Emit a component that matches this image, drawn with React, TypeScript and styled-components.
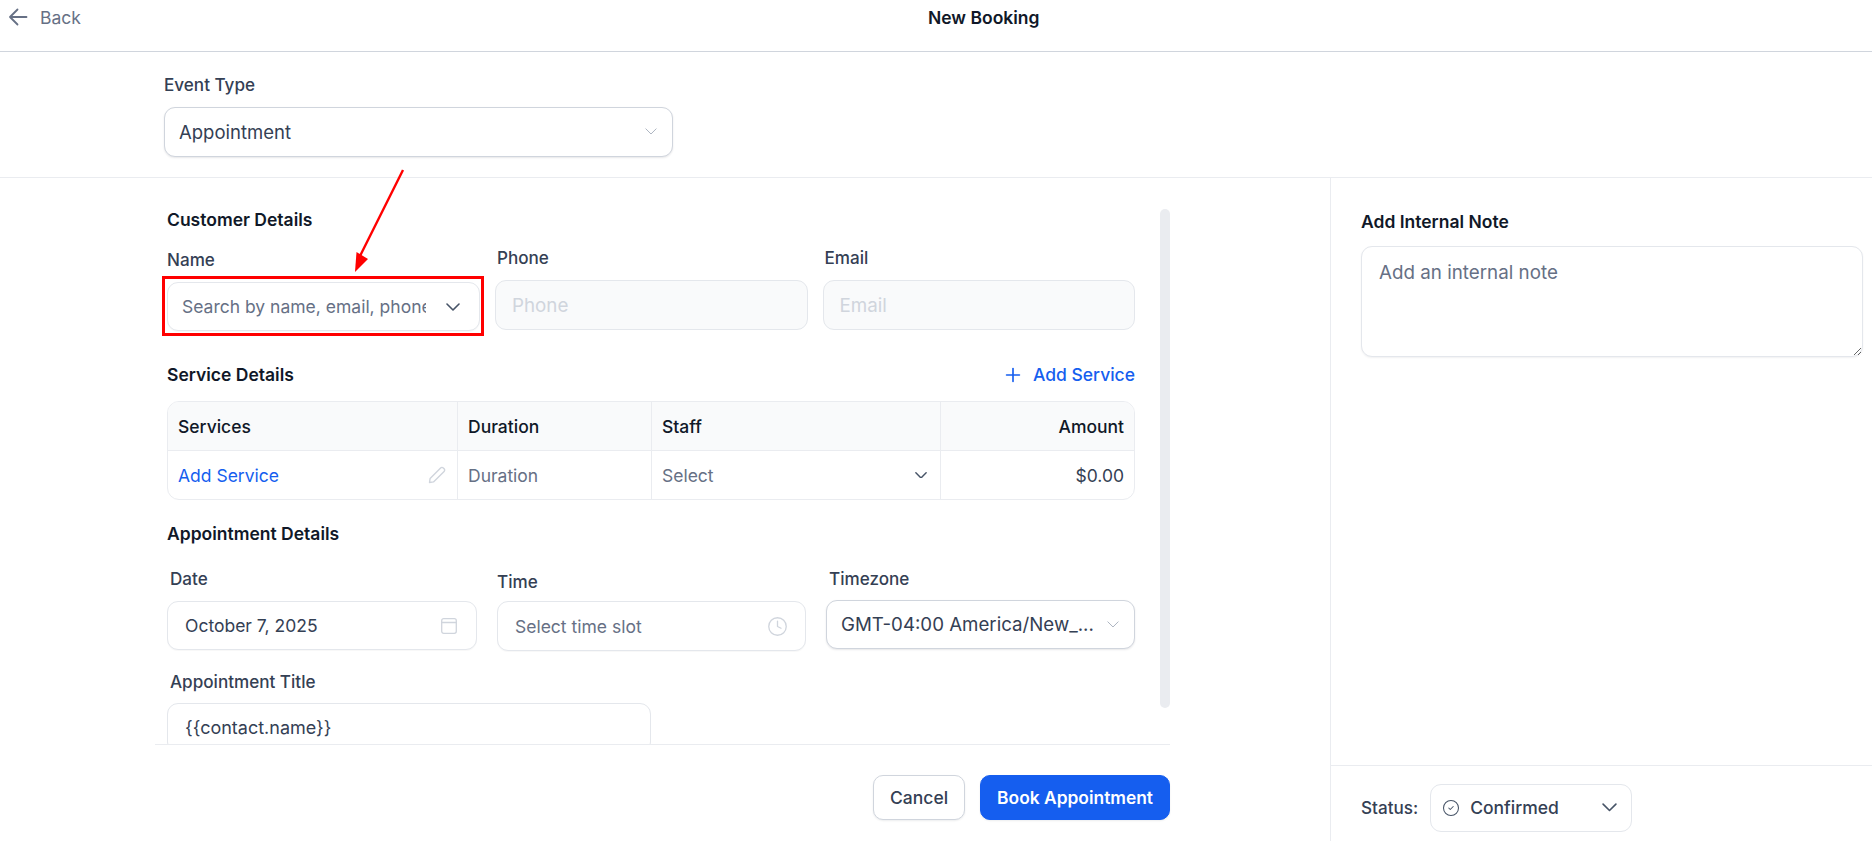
import styled, { createGlobalStyle } from "styled-components";
import { CircleCheck, Clock, Plus } from "lucide-react";

const GlobalStyle = createGlobalStyle`
  html, body {
    margin: 0;
    padding: 0;
    background: #fff;
    font-family: Inter, "Noto Sans", sans-serif;
    color: #344054;
    overflow: hidden;
  }
  * {
    box-sizing: border-box;
  }
`;

const Page = styled.div`
  position: relative;
  width: 1872px;
  height: 841px;
  display: flex;
  flex-direction: column;
  overflow: hidden;
`;

const TopBar = styled.header`
  height: 52px;
  flex: none;
  display: grid;
  grid-template-columns: 928px auto;
  border-bottom: 1px solid #d0d5dd;
  padding-bottom: 17px;
`;

const BackLink = styled.a`
  display: flex;
  align-items: center;
  gap: 12px;
  padding-left: 8px;
  font-size: 17.5px;
  color: #667085;
`;

const PageTitle = styled.h1`
  margin: 0;
  align-self: center;
  font-size: 17.5px;
  font-weight: 600;
  color: #101828;
`;

const EventBar = styled.section`
  height: 126px;
  flex: none;
  padding: 22px 0 0 164px;
  border-bottom: 1px solid #eaecf0;
`;

const Body = styled.div`
  flex: 1;
  min-height: 0;
  display: flex;
`;

const MainColumn = styled.main`
  width: 1331px;
  flex: none;
  border-right: 1px solid #eaecf0;
  padding-left: 155px;
`;

const ScrollArea = styled.div`
  width: 1015px;
  height: 567px;
  display: flex;
  overflow: hidden;
  padding-left: 12px;
  border-bottom: 1px solid #eaecf0;
`;

const Form = styled.div`
  width: 968px;
  flex: none;
  padding-top: 32px;
`;

const ScrollThumb = styled.div`
  width: 10px;
  height: 499px;
  flex: none;
  margin: 31px 0 0 25px;
  border-radius: 5px;
  background: #eaecf0;
`;

const SectionTitle = styled.h2<{ $top?: number }>`
  margin: ${(p) => p.$top ?? 0}px 0 0;
  font-size: 17.5px;
  line-height: 20px;
  font-weight: 600;
  color: #101828;
`;

const SectionHead = styled.div`
  margin-top: 33px;
  height: 22px;
  display: flex;
  align-items: center;
  justify-content: space-between;
`;

const AddLink = styled.a`
  display: flex;
  align-items: center;
  gap: 13px;
  font-size: 17.5px;
  line-height: 20px;
  font-weight: 500;
  color: #155eef;
`;

const AddIcon = styled(Plus)`
  margin: 0 -4px;
`;

const FieldRow = styled.div<{ $columns: string; $top: number }>`
  display: grid;
  grid-template-columns: ${(p) => p.$columns};
  margin-top: ${(p) => p.$top}px;
`;

const Field = styled.div<{ $top?: number; $gap?: number; $width?: number; $side?: number }>`
  display: flex;
  flex-direction: column;
  margin: ${(p) => p.$top ?? 0}px 0 0 ${(p) => p.$side ?? 0}px;
  gap: ${(p) => p.$gap ?? 11}px;
  ${(p) => (p.$width ? `width: ${p.$width}px;` : "")}
`;

const MiddleField = styled(Field)`
  margin-right: 20px;
`;

const Label = styled.label<{ $indent?: number }>`
  display: block;
  padding-left: ${(p) => p.$indent ?? 0}px;
  font-size: 17.1px;
  line-height: 22px;
  font-weight: 500;
  color: #344054;
`;

const Box = styled.div<{ $height?: number; $right?: number; $lift?: number }>`
  height: ${(p) => p.$height ?? 49}px;
  display: flex;
  align-items: center;
  gap: 8px;
  padding: 0 ${(p) => p.$right ?? 17}px ${(p) => p.$lift ?? 0}px 17px;
  background: #fff;
  border: 1px solid #e4e7ec;
  border-radius: 11px;
  box-shadow: 0 1px 1px rgba(16, 24, 40, 0.03);
`;

const SelectBox = styled(Box)`
  padding: 0 15px ${(p) => p.$lift ?? 0}px 14px;
  border-color: #d0d5dd;
  box-shadow: 0 1px 2px rgba(16, 24, 40, 0.1);
`;

const NameBox = styled(Box)`
  padding: 0 19px 0 14px;
  gap: 20px;
`;

const BoxText = styled.span<{ $muted?: boolean; $size?: number }>`
  flex: 1;
  min-width: 0;
  white-space: nowrap;
  font-size: ${(p) => p.$size ?? 17.5}px;
  color: ${(p) => (p.$muted ? "#667085" : "#344054")};
`;

const ClippedInput = styled.input`
  flex: 1;
  min-width: 0;
  border: 0;
  outline: 0;
  padding: 0;
  background: transparent;
  font: inherit;
  font-size: 17.5px;
  &::placeholder {
    color: #667085;
    opacity: 1;
  }
`;

const DisabledInput = styled.input`
  width: 100%;
  height: 50px;
  padding: 0 16px;
  border: 1px solid #e4e7ec;
  border-radius: 11px;
  outline: 0;
  background: #f9fafb;
  font: inherit;
  font-size: 18.8px;
  &::placeholder {
    color: #d0d5dd;
    opacity: 1;
  }
`;

const Marked = styled.div`
  position: relative;
  &::after {
    content: "";
    position: absolute;
    inset: -6px -4px -5px -5px;
    border: 3px solid #f00;
    pointer-events: none;
  }
`;

const ServiceTable = styled.div`
  margin-top: 15px;
  height: 99px;
  display: grid;
  grid-template-columns: 290px 194px 289px 1fr;
  grid-template-rows: 49px 48px;
  border: 1px solid #eaecf0;
  border-radius: 12px;
  overflow: hidden;
`;

const HeadCell = styled.div<{ $end?: boolean }>`
  display: flex;
  align-items: center;
  justify-content: ${(p) => (p.$end ? "flex-end" : "flex-start")};
  padding: 0 10px;
  background: #f9fafb;
  border-bottom: 1px solid #eaecf0;
  border-right: ${(p) => (p.$end ? "0" : "1px solid #eaecf0")};
  font-size: 17.5px;
  font-weight: 500;
  color: #101828;
`;

const BodyCell = styled.div<{ $end?: boolean; $tone?: string; $right?: number }>`
  display: flex;
  align-items: center;
  justify-content: ${(p) => (p.$end ? "flex-end" : "space-between")};
  padding: 0 ${(p) => p.$right ?? 10}px 0 10px;
  border-right: ${(p) => (p.$end ? "0" : "1px solid #eaecf0")};
  font-size: 17.5px;
  color: ${(p) => p.$tone ?? "#667085"};
`;

const ActionBar = styled.div`
  width: 1015px;
  display: flex;
  justify-content: flex-end;
  gap: 15px;
  padding-top: 30px;
`;

const Button = styled.button<{ $primary?: boolean }>`
  height: 45px;
  padding: 0 16px;
  border: 1px solid ${(p) => (p.$primary ? "#155eef" : "#d0d5dd")};
  border-radius: 10px;
  background: ${(p) => (p.$primary ? "#155eef" : "#fff")};
  color: ${(p) => (p.$primary ? "#fff" : "#344054")};
  font: inherit;
  font-size: ${(p) => (p.$primary ? 17.4 : 17.5)}px;
  font-weight: ${(p) => (p.$primary ? 600 : 500)};
  box-shadow: 0 1px 2px rgba(16, 24, 40, 0.08);
`;

const SideColumn = styled.aside`
  flex: 1;
  display: flex;
  flex-direction: column;
`;

const NotePanel = styled.div`
  flex: 1;
  padding: 34px 9px 0 30px;
`;

const NoteInput = styled.textarea`
  display: block;
  width: 100%;
  height: 111px;
  margin-top: 14px;
  padding: 14px 17px;
  border: 1px solid #e4e7ec;
  border-radius: 11px;
  outline: 0;
  font: inherit;
  font-size: 18.8px;
  box-shadow: 0 1px 2px rgba(16, 24, 40, 0.06);
  &::placeholder {
    color: #667085;
    opacity: 1;
  }
`;

const StatusBar = styled.div`
  height: 76px;
  flex: none;
  display: flex;
  align-items: center;
  gap: 12px;
  padding: 8px 0 0 30px;
  border-top: 1px solid #eaecf0;
  font-size: 17.1px;
  font-weight: 500;
`;

const StatusSelect = styled.div`
  width: 202px;
  height: 48px;
  display: flex;
  align-items: center;
  gap: 10px;
  padding: 0 14px 0 11px;
  border: 1px solid #e4e7ec;
  border-radius: 11px;
  color: #344054;
`;

const StatusText = styled.span`
  flex: 1;
  font-size: 17.5px;
`;

const Icon = styled.svg<{ $color: string; $stroke?: number }>`
  flex: none;
  display: block;
  fill: none;
  stroke: ${(p) => p.$color};
  stroke-width: ${(p) => p.$stroke ?? 1.5};
  stroke-linecap: round;
  stroke-linejoin: round;
`;

const ArrowOverlay = styled.svg`
  position: absolute;
  left: 340px;
  top: 160px;
  pointer-events: none;
`;

const Chevron = ({ width, color, stroke }: { width: number; color: string; stroke?: number }) => (
  <Icon viewBox="0 0 14 8" width={width} height={(width * 8) / 14} $color={color} $stroke={stroke}>
    <path d="M1 1l6 6 6-6" />
  </Icon>
);

const App = () => (
  <Page>
    <GlobalStyle />
    <TopBar>
      <BackLink>
        <Icon viewBox="0 0 20 20" width={20} height={20} $color="#667085" $stroke={1.8}>
          <path d="M18.5 10H2m0 0l7.5 7.5M2 10l7.5-7.5" />
        </Icon>
        Back
      </BackLink>
      <PageTitle>New Booking</PageTitle>
    </TopBar>

    <EventBar>
      <Field $width={509}>
        <Label>Event Type</Label>
        <SelectBox $height={50} $lift={1}>
          <BoxText $size={18.5}>Appointment</BoxText>
          <Chevron width={12} color="#a8b0bd" stroke={1.1} />
        </SelectBox>
      </Field>
    </EventBar>

    <Body>
      <MainColumn>
        <ScrollArea>
          <Form>
            <SectionTitle>Customer Details</SectionTitle>
            <FieldRow $columns="313px 1fr 1fr" $top={17}>
              <Field $top={2}>
                <Label>Name</Label>
                <Marked>
                  <NameBox>
                    <ClippedInput placeholder="Search by name, email, phone" />
                    <Chevron width={14} color="#475467" stroke={1.6} />
                  </NameBox>
                </Marked>
              </Field>
              <Field $side={15}>
                <Label $indent={2}>Phone</Label>
                <DisabledInput placeholder="Phone" disabled />
              </Field>
              <Field $side={15}>
                <Label $indent={2}>Email</Label>
                <DisabledInput placeholder="Email" disabled />
              </Field>
            </FieldRow>

            <SectionHead>
              <SectionTitle>Service Details</SectionTitle>
              <AddLink>
                <AddIcon size={22} strokeWidth={1.8} />
                Add Service
              </AddLink>
            </SectionHead>
            <ServiceTable>
              <HeadCell>Services</HeadCell>
              <HeadCell>Duration</HeadCell>
              <HeadCell>Staff</HeadCell>
              <HeadCell $end>Amount</HeadCell>
              <BodyCell $tone="#155eef" $right={11}>
                <span>Add Service</span>
                <Icon viewBox="0 0 18 18" width={18} height={18} $color="#d0d5dd" $stroke={1.4}>
                  <path d="M1.5 16.5l.6-4L12.6 1.9a1.9 1.9 0 0 1 2.7 0l.8.8a1.9 1.9 0 0 1 0 2.7L5.5 15.9l-4 .6z" />
                </Icon>
              </BodyCell>
              <BodyCell>Duration</BodyCell>
              <BodyCell $right={13}>
                <span>Select</span>
                <Chevron width={12} color="#475467" stroke={1.7} />
              </BodyCell>
              <BodyCell $end $tone="#344054">$0.00</BodyCell>
            </ServiceTable>

            <SectionTitle $top={24}>Appointment Details</SectionTitle>
            <FieldRow $columns="310px 1fr 309px" $top={24}>
              <Field>
                <Label $indent={3}>Date</Label>
                <Box $right={19}>
                  <BoxText>October 7, 2025</BoxText>
                  <Icon viewBox="0 0 16 16" width={16} height={16} $color="#d0d5dd" $stroke={1.3}>
                    <rect x="0.7" y="0.7" width="14.6" height="14.6" rx="2" />
                    <path d="M0.7 4.5h14.6" />
                  </Icon>
                </Box>
              </Field>
              <MiddleField $top={3} $gap={8} $side={20}>
                <Label>Time</Label>
                <Box $height={50}>
                  <BoxText $muted>Select time slot</BoxText>
                  <Clock size={21} strokeWidth={1.5} color="#d0d5dd" />
                </Box>
              </MiddleField>
              <Field $gap={10}>
                <Label $indent={3}>Timezone</Label>
                <SelectBox>
                  <BoxText $size={18.7}>GMT-04:00 America/New_...</BoxText>
                  <Chevron width={12} color="#a8b0bd" stroke={1.1} />
                </SelectBox>
              </Field>
            </FieldRow>

            <Field $top={20} $gap={10} $width={484}>
              <Label $indent={3}>Appointment Title</Label>
              <Box $height={50} $lift={2}>
                <BoxText $size={18}>{"{{contact.name}}"}</BoxText>
              </Box>
            </Field>
          </Form>
          <ScrollThumb />
        </ScrollArea>
        <ActionBar>
          <Button>Cancel</Button>
          <Button $primary>Book Appointment</Button>
        </ActionBar>
      </MainColumn>

      <SideColumn>
        <NotePanel>
          <SectionTitle>Add Internal Note</SectionTitle>
          <NoteInput placeholder="Add an internal note" />
        </NotePanel>
        <StatusBar>
          Status:
          <StatusSelect>
            <CircleCheck size={18} strokeWidth={1.4} color="#475467" />
            <StatusText>Confirmed</StatusText>
            <Chevron width={15} color="#475467" stroke={1.5} />
          </StatusSelect>
        </StatusBar>
      </SideColumn>
    </Body>

    <ArrowOverlay width={80} height={120} viewBox="0 0 80 120">
      <path d="M63 10L20 96" stroke="#f00" strokeWidth="2.4" fill="none" />
      <path d="M15 112L16.5 92L28 99z" fill="#f00" />
    </ArrowOverlay>
  </Page>
);

export default App;
